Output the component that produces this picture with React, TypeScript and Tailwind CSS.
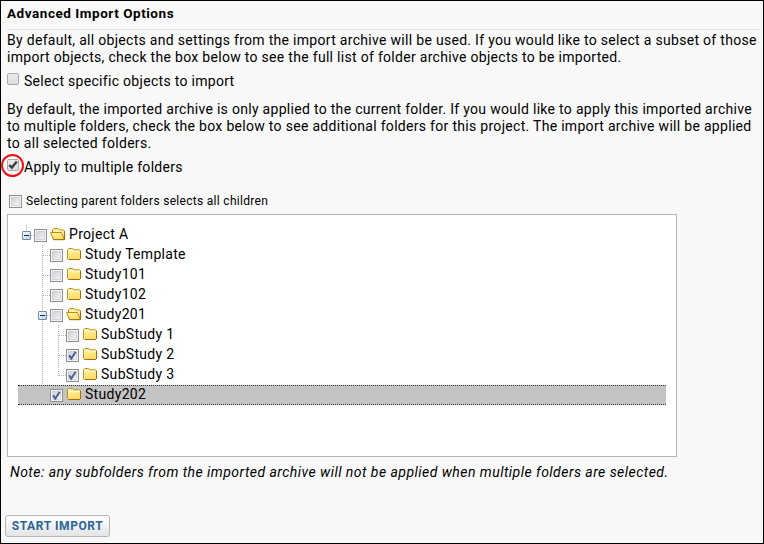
import * as React from "react";

type Row = {
  name: string;
  depth: number;
  open?: boolean;
  checked?: boolean;
  selected?: boolean;
};

const rows: Row[] = [
  { name: "Project A", depth: 0, open: true },
  { name: "Study Template", depth: 1 },
  { name: "Study101", depth: 1 },
  { name: "Study102", depth: 1 },
  { name: "Study201", depth: 1, open: true },
  { name: "SubStudy 1", depth: 2 },
  { name: "SubStudy 2", depth: 2, checked: true },
  { name: "SubStudy 3", depth: 2, checked: true },
  { name: "Study202", depth: 1, checked: true, selected: true },
];

function TreeCheckbox({ checked }: { checked?: boolean }) {
  return (
    <svg width="13" height="13" viewBox="0 0 13 13" className="block shrink-0">
      <defs>
        <linearGradient id="box" x1="0" y1="0" x2="1" y2="1">
          <stop offset="0" stopColor="#cbcfd5" />
          <stop offset="1" stopColor="#f6f6f6" />
        </linearGradient>
      </defs>
      <rect x="0.5" y="0.5" width="12" height="12" fill="#f4f4f4" stroke="#8e8f8f" />
      <rect x="2.5" y="2.5" width="8" height="8" fill="url(#box)" stroke="#bfc3c9" strokeOpacity="0.6" />
      {checked && (
        <path d="M3.2 6.2 5.3 9.6 9.7 2.8" fill="none" stroke="#4a5f97" strokeWidth="1.9" />
      )}
    </svg>
  );
}

function NativeCheckbox({ checked }: { checked?: boolean }) {
  return (
    <div className="h-3 w-3 shrink-0 rounded-[2px] border border-[#a9a9a9] bg-linear-to-b from-[#ececec] to-[#dcdcdc]">
      {checked && (
        <svg width="10" height="10" viewBox="0 0 10 10" className="block">
          <path d="M1.3 5 3.8 7.6 8.8 1.6" fill="none" stroke="#3d3d3d" strokeWidth="2.4" />
        </svg>
      )}
    </div>
  );
}

function Folder({ open }: { open?: boolean }) {
  return (
    <svg width="16" height="14" viewBox="0 0 16 14" className="block shrink-0">
      <defs>
        <linearGradient id="folder" x1="0" y1="0" x2="0.3" y2="1">
          <stop offset="0" stopColor="#fff6b0" />
          <stop offset="1" stopColor="#ffdb62" />
        </linearGradient>
      </defs>
      {open ? (
        <>
          <path d="M2.5 6V3L4 1.5h4.2L9.7 3h3.8l1 1v8.5h-11z" fill="#fff0a0" stroke="#b98a19" />
          <path d="M.6 5.5h10.9l2.8 7H3.4z" fill="url(#folder)" stroke="#b98a19" strokeLinejoin="round" />
          <path d="M14.6 4.5v8.2M3.5 12.7h11" stroke="#a06d0c" />
        </>
      ) : (
        <>
          <path d="M1.5 2.7 2.7 1.5h4L8 2.8h5.5l1 1v7.7l-1 1h-11l-1-1z" fill="url(#folder)" stroke="#bd9223" />
          <path d="M2.5 4.3h11" stroke="#fffbd8" />
          <path d="M2.5 12.5h11l1-1V4" fill="none" stroke="#a06d0c" />
        </>
      )}
    </svg>
  );
}

function Minus() {
  return (
    <svg width="9" height="9" viewBox="0 0 9 9" className="block">
      <defs>
        <linearGradient id="minus" x1="0" y1="0" x2="1" y2="1">
          <stop offset="0" stopColor="#ffffff" />
          <stop offset="1" stopColor="#b4c9e2" />
        </linearGradient>
      </defs>
      <rect x="0.5" y="0.5" width="8" height="8" rx="0.5" fill="url(#minus)" stroke="#7189aa" />
      <path d="M2 4.5h5" stroke="#1b2c48" />
    </svg>
  );
}

// 16px wide connector column in front of each node
function Elbow({ row, last }: { row: Row; last: boolean }) {
  const top = row.depth === 0;
  return (
    <svg width="16" height="20" viewBox="0 0 16 20" className="block shrink-0">
      <g stroke="#b4b4b4" strokeDasharray="1 1">
        <path d={top || last ? "M8.5 0V11" : "M8.5 0V20"} />
        <path d="M9 10.5H16" />
      </g>
      {row.open && (
        <g transform="translate(4 6)">
          <Minus />
        </g>
      )}
    </svg>
  );
}

function TreeRow({ row, last }: { row: Row; last: boolean }) {
  return (
    <div className={row.selected ? "flex h-5 border-y border-dotted border-[#333] bg-[#c4c4c4]" : "flex h-5"}>
      {row.depth > 0 && <div className="w-4 shrink-0" />}
      {row.depth > 1 && (
        <svg width="16" height="20" viewBox="0 0 16 20" className="block shrink-0">
          <path d="M8.5 0V20" stroke="#b4b4b4" strokeDasharray="1 1" />
        </svg>
      )}
      {row.selected ? <div className="w-4 shrink-0" /> : <Elbow row={row} last={last} />}
      <div className={row.selected ? "mt-[3px]" : "mt-1"}>
        <TreeCheckbox checked={row.checked} />
      </div>
      <div className={row.selected ? "ml-[3px] mt-px" : "ml-[3px] mt-0.5"}>
        <Folder open={row.open} />
      </div>
      <span className={row.selected ? "-mt-px ml-[3px] leading-[19px]" : "ml-[3px] leading-[19px]"}>{row.name}</span>
    </div>
  );
}

export default function App() {
  return (
    <div className="flex h-[544px] w-[764px] flex-col items-start whitespace-nowrap border border-black bg-[#f8f8f8] font-['Roboto',sans-serif] text-[14px] leading-[17px] tracking-[0.3px] text-black">
      <h1 className="ml-1.5 h-[29px] w-[753px] border-b border-[#e2e2e2] pt-1 text-[13.5px] font-bold tracking-[0.54px]">
        Advanced Import Options
      </h1>
      <p className="ml-1.5 mt-0.5">
        By default, all objects and settings from the import archive will be used. If you would like to select a subset of those
        <br />
        import objects, check the box below to see the full list of folder archive objects to be imported.
      </p>
      <label className="ml-1.5 mt-[7px] flex">
        <NativeCheckbox />
        <span className="ml-[5px]">Select specific objects to import</span>
      </label>
      <p className="ml-1.5 mt-[11px]">
        By default, the imported archive is only applied to the current folder. If you would like to apply this imported archive
        <br />
        to multiple folders, check the box below to see additional folders for this project. The import archive will be applied
        <br />
        to all selected folders.
      </p>
      <label className="relative ml-1.5 mt-[7px] flex">
        <NativeCheckbox checked />
        <span className="absolute -left-1.5 -top-[5px] h-[23px] w-[23px] rounded-full border-2 border-[#ee1118]" />
        <span className="ml-[5px]">Apply to multiple folders</span>
      </label>
      <label className="ml-2 mt-[17px] flex h-[17px] text-[12px]">
        <div className="mt-0.5">
          <TreeCheckbox />
        </div>
        <span className="ml-1">Selecting parent folders selects all children</span>
      </label>
      <div className="ml-1.5 mt-1 h-[243px] w-[670px] border border-[#b5b5b5] bg-white px-2.5 pt-2.5">
        {rows.map((row, i) => (
          <TreeRow key={row.name} row={row} last={i === 7} />
        ))}
      </div>
      <p className="ml-[9px] mt-[7px] italic tracking-[0.46px]">
        Note: any subfolders from the imported archive will not be applied when multiple folders are selected.
      </p>
      <button className="ml-1 mt-[34px] h-[22px] w-[105px] rounded-[3px] border border-[#b5b5b5] bg-linear-to-b from-white to-[#e4e4e4] text-[12px] font-bold leading-5 tracking-[0.6px] text-[#2c6595]">
        START IMPORT
      </button>
    </div>
  );
}
